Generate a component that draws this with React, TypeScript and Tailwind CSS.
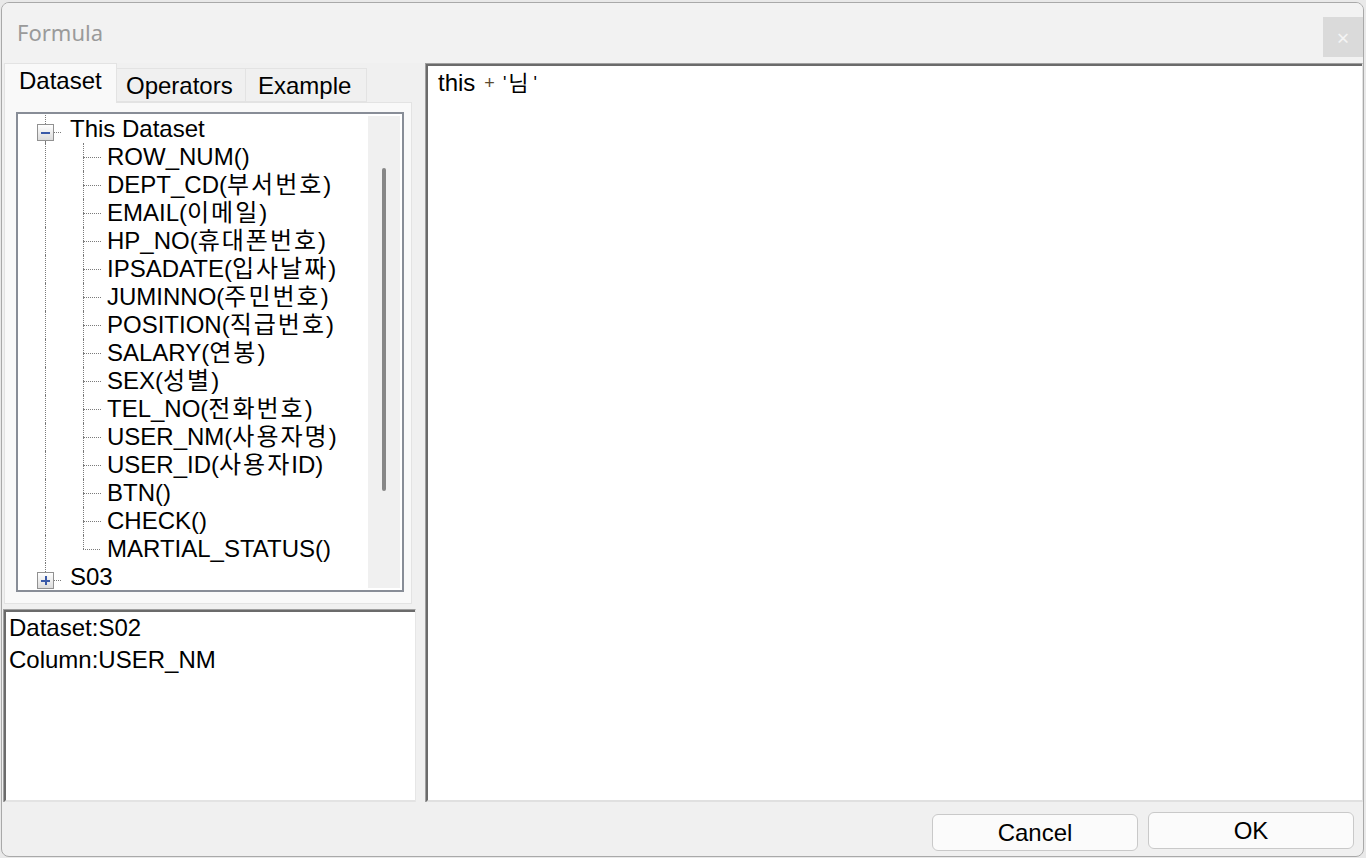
import React from "react"

const columns = [
    "ROW_NUM()",
    "DEPT_CD(부서번호)",
    "EMAIL(이메일)",
    "HP_NO(휴대폰번호)",
    "IPSADATE(입사날짜)",
    "JUMINNO(주민번호)",
    "POSITION(직급번호)",
    "SALARY(연봉)",
    "SEX(성별)",
    "TEL_NO(전화번호)",
    "USER_NM(사용자명)",
    "USER_ID(사용자ID)",
    "BTN()",
    "CHECK()",
    "MARTIAL_STATUS()",
]

// hangul glyphs are a touch wider in the original font
const Label = ({ text }: { text: string }) => {
    const parts = text.split(/([가-힣]+)/)
    return (
        <>
            {parts.map((p, i) =>
                /[가-힣]/.test(p) ? (
                    <span key={i} className="tracking-[2px]">{p}</span>
                ) : (
                    <span key={i}>{p}</span>
                )
            )}
        </>
    )
}

const ExpandBox = ({ open }: { open: boolean }) => (
    <div className="w-[17px] h-[17px] border border-[#919191] bg-gradient-to-b from-white to-[#dcdcdc] flex items-center justify-center relative">
        <div className="w-[9px] h-[2px] bg-[#3a5aa8]" />
        {!open && <div className="absolute w-[2px] h-[9px] bg-[#3a5aa8]" />}
    </div>
)

const RootRow = ({ label, open, last }: { label: string; open: boolean; last?: boolean }) => (
    <div className="flex h-[28px] shrink-0">
        <div className="w-[19px]" />
        <div className="w-[17px] flex flex-col items-center">
            <div className="h-[9px] w-px border-l border-dotted border-[#7a7a7a]" />
            <ExpandBox open={open} />
            {!last && <div className="flex-1 w-px border-l border-dotted border-[#7a7a7a]" />}
        </div>
        <div className="w-[9px] flex flex-col">
            <div className="h-[17px]" />
            <div className="w-[7px] border-t border-dotted border-[#7a7a7a]" />
        </div>
        <div className="pl-[7px] leading-[28px]">{label}</div>
    </div>
)

const ChildRow = ({ label, last }: { label: string; last: boolean }) => (
    <div className="flex h-[28px] shrink-0">
        <div className="w-[27px]" />
        <div className="w-[38px] border-l border-dotted border-[#7a7a7a]" />
        <div className="w-[24px] flex flex-col">
            <div className="h-[14px] border-l border-dotted border-[#7a7a7a]" />
            <div className={`flex-1 ${last ? "" : "border-l border-dotted border-[#7a7a7a]"}`}>
                <div className="w-[17px] border-t border-dotted border-[#7a7a7a]" />
            </div>
        </div>
        <div className="leading-[28px] whitespace-nowrap">
            <Label text={label} />
        </div>
    </div>
)

const App = () => {
    return (
        <div className="w-[1366px] h-[858px] bg-[#e9e9e9] pt-[2px] overflow-hidden font-[Liberation_Sans,Noto_Sans_CJK_KR,sans-serif] text-black">
            <div className="ml-[1px] w-[1363px] h-[855px] border border-[#a9a9a9] rounded-lg bg-[#f0f0f0] flex flex-col overflow-hidden">
                {/* title bar */}
                <div className="h-[60px] flex bg-[#f2f2f2] shrink-0">
                    <div className="pl-[15px] pt-[14px] text-[22px] leading-[30px] text-[#9a9a9a] font-[Noto_Sans,sans-serif] flex-1">
                        Formula
                    </div>
                    <div className="mt-[14px] w-[40px] h-[40px] bg-[#dadada] flex items-center justify-center text-[#f4f4f4] text-[22px] font-[Noto_Sans,sans-serif]">
                        ×
                    </div>
                </div>

                {/* body */}
                <div className="h-[739px] flex shrink-0">
                    <div className="w-[414px] flex flex-col shrink-0">
                        <div className="h-[39px] flex items-end pl-[2px] text-[24px]">
                            <div className="relative z-10 w-[113px] h-[40px] -mb-px bg-[#f9f9f9] border border-b-0 border-[#e3e3e3] pl-[14px] leading-[34px]">
                                Dataset
                            </div>
                            <div className="w-[129px] h-[34px] bg-[#f0f0f0] border border-l-0 border-[#e3e3e3] pl-[9px] leading-[34px]">
                                Operators
                            </div>
                            <div className="w-[121px] h-[34px] bg-[#f0f0f0] border border-l-0 border-[#e3e3e3] pl-[12px] leading-[34px]">
                                Example
                            </div>
                        </div>
                        <div className="ml-[2px] w-[408px] h-[502px] bg-[#f9f9f9] border border-[#e3e3e3] shrink-0">
                            <div className="ml-[11px] mt-[9px] w-[388px] h-[480px] border-2 border-[#888d97] bg-white flex text-[24px]">
                                <div className="flex-1 pt-px flex flex-col overflow-hidden">
                                    <RootRow label="This Dataset" open />
                                    {columns.map((c, i) => (
                                        <ChildRow key={c} label={c} last={i === columns.length - 1} />
                                    ))}
                                    <RootRow label="S03" open={false} last />
                                </div>
                                <div className="w-[32px] my-[2px] mr-[2px] bg-[#f0f0f0] pt-[52px] pl-[14px]">
                                    <div className="w-[4px] h-[323px] bg-[#878787] rounded-full" />
                                </div>
                            </div>
                        </div>
                        <div className="mt-[5px] ml-px w-[413px] h-[193px] border-t border-l border-[#a0a0a0] border-r border-r-[#e6e6e6] border-b-0 shrink-0">
                            <div className="h-full border-t-2 border-l-2 border-[#6b6b6b] border-b-2 border-b-[#e3e3e3] bg-white pl-[3px] text-[24px] leading-[32px] whitespace-nowrap">
                                <div>Dataset:S02</div>
                                <div>Column:USER_NM</div>
                            </div>
                        </div>
                    </div>

                    <div className="ml-[9px] w-[938px] h-full border-t border-l border-[#a0a0a0] border-r border-r-[#e3e3e3] shrink-0">
                        <div className="h-full border-t-2 border-l-2 border-[#6b6b6b] border-b-2 border-b-[#e0e0e0] bg-white pl-[10px] pt-[3px] text-[24px] whitespace-nowrap">
                            <div className="flex items-center h-[28px]">
                                <span>this</span>
                                <span className="ml-[9px] text-[18px] text-[#5a4a30]">+</span>
                                <span className="ml-[8px] text-[18px]">'</span>
                                <span className="ml-[2px] text-[22px]">님</span>
                                <span className="ml-[5px] text-[18px]">'</span>
                            </div>
                        </div>
                    </div>
                </div>

                {/* footer */}
                <div className="flex-1 flex justify-end items-start pr-[9px] gap-[10px] text-[24px]">
                    <button className="mt-[12px] w-[206px] h-[37px] rounded-[6px] border border-[#c9c9c9] bg-[#fbfbfb] leading-[34px]">
                        Cancel
                    </button>
                    <button className="mt-[10px] w-[206px] h-[37px] rounded-[6px] border border-[#c9c9c9] bg-[#fbfbfb] leading-[34px]">
                        OK
                    </button>
                </div>
            </div>
        </div>
    )
}

export default App
